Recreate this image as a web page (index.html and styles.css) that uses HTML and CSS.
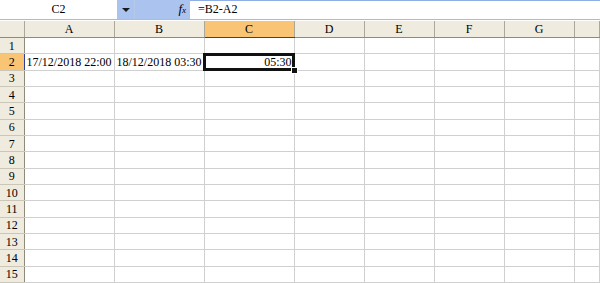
FILE: index.html
```html
<!DOCTYPE html>
<html lang="en">
<head>
    <meta charset="UTF-8">
    <title>Book1 - C2</title>
    <link rel="stylesheet" href="styles.css">
</head>
<body>
    <!-- Formula bar -->
    <div class="formula-bar">
        <div class="name-box">C2</div>
        <div class="name-drop"><span class="arrow"></span></div>
        <div class="fx-box"><span class="fx"><i>f</i><small>x</small></span></div>
        <div class="formula">=B2-A2</div>
    </div>

    <!-- Worksheet -->
    <table class="sheet">
        <colgroup>
            <col class="c-hdr"><col class="c-wide"><col class="c-wide"><col class="c-wide">
            <col class="c-norm"><col class="c-norm"><col class="c-norm"><col class="c-norm"><col>
        </colgroup>
        <tr class="col-heads">
            <th class="corner"></th><th>A</th><th>B</th><th class="sel">C</th><th>D</th><th>E</th><th>F</th><th>G</th><th></th>
        </tr>
        <tr><th>1</th><td></td><td></td><td></td><td></td><td></td><td></td><td></td><td></td></tr>
        <tr><th class="sel">2</th><td>17/12/2018 22:00</td><td>18/12/2018 03:30</td><td class="active">05:30<span class="handle"></span></td><td></td><td></td><td></td><td></td><td></td></tr>
        <tr><th>3</th><td></td><td></td><td></td><td></td><td></td><td></td><td></td><td></td></tr>
        <tr><th>4</th><td></td><td></td><td></td><td></td><td></td><td></td><td></td><td></td></tr>
        <tr><th>5</th><td></td><td></td><td></td><td></td><td></td><td></td><td></td><td></td></tr>
        <tr><th>6</th><td></td><td></td><td></td><td></td><td></td><td></td><td></td><td></td></tr>
        <tr><th>7</th><td></td><td></td><td></td><td></td><td></td><td></td><td></td><td></td></tr>
        <tr><th>8</th><td></td><td></td><td></td><td></td><td></td><td></td><td></td><td></td></tr>
        <tr><th>9</th><td></td><td></td><td></td><td></td><td></td><td></td><td></td><td></td></tr>
        <tr><th>10</th><td></td><td></td><td></td><td></td><td></td><td></td><td></td><td></td></tr>
        <tr><th>11</th><td></td><td></td><td></td><td></td><td></td><td></td><td></td><td></td></tr>
        <tr><th>12</th><td></td><td></td><td></td><td></td><td></td><td></td><td></td><td></td></tr>
        <tr><th>13</th><td></td><td></td><td></td><td></td><td></td><td></td><td></td><td></td></tr>
        <tr><th>14</th><td></td><td></td><td></td><td></td><td></td><td></td><td></td><td></td></tr>
        <tr><th>15</th><td></td><td></td><td></td><td></td><td></td><td></td><td></td><td></td></tr>
    </table>
</body>
</html>
```

FILE: styles.css
```css
body {
    margin: 0;
    font-family: "Liberation Serif", "Times New Roman", serif;
    font-size: 12px;
    color: #000;
    background: #fff;
    overflow: hidden;
}

.formula-bar {
    display: flex;
    height: 19px;
    border-bottom: 1px solid #b9b9b9;
    margin-bottom: 1px;
}
.name-box {
    width: 117px;
    line-height: 18px;
    text-align: center;
    background: #fff;
}
.name-drop {
    width: 17px;
    border-right: 1px solid #b7c9ea;
    background: #aac3ef;
    display: flex;
    align-items: center;
    justify-content: center;
}
.arrow {
    width: 0;
    height: 0;
    border-left: 4px solid transparent;
    border-right: 4px solid transparent;
    border-top: 4px solid #1a1a1a;
}
.fx-box {
    width: 53px;
    background: #aac3ef;
    text-align: right;
    padding-right: 2px;
}
.fx {
    display: inline-block;
    line-height: 17px;
    font-size: 13px;
    margin-right: 2px;
}
.fx small {
    font-size: 9px;
    font-style: italic;
}
.formula {
    flex: 1;
    border-top: 1px solid #8eaee5;
    padding-left: 8px;
    line-height: 17px;
}

.sheet {
    border-collapse: collapse;
    table-layout: fixed;
    width: 600px;
    font-size: 12px;
}
.c-hdr { width: 24px; }
.c-wide { width: 90px; }
.c-norm { width: 70px; }

.sheet th {
    background: #efebde;
    font-weight: normal;
    padding: 0;
    line-height: 14px;
    border: 1px solid #aca899;
    border-top: none;
    border-left: none;
}
.col-heads th {
    height: 16px;
    border-bottom: 1px solid #8e8b7c;
}
.sheet tr + tr {
    height: 16.33px;
}
.sheet tr + tr th {
    border-right: 1px solid #8e8b7c;
    border-bottom: 1px solid #cbc7b8;
    text-align: center;
}
.sheet th.sel {
    background: #f9c574;
}
.col-heads th.sel {
    border-bottom: 1px solid #2b3f9b;
}
.sheet tr + tr th.sel {
    border-right: 1px solid #2b3f9b;
}

.sheet td {
    padding: 0 2px;
    border: 1px solid #d0d0d0;
    border-top: none;
    white-space: nowrap;
    overflow: hidden;
    line-height: 14px;
}
.sheet td.active {
    position: relative;
    text-align: right;
    overflow: visible;
    outline: 3px solid #111;
    outline-offset: -2px;
}
.handle {
    position: absolute;
    right: -4px;
    bottom: -4px;
    width: 5px;
    height: 5px;
    background: #111;
    border: 1px solid #fff;
}
```
